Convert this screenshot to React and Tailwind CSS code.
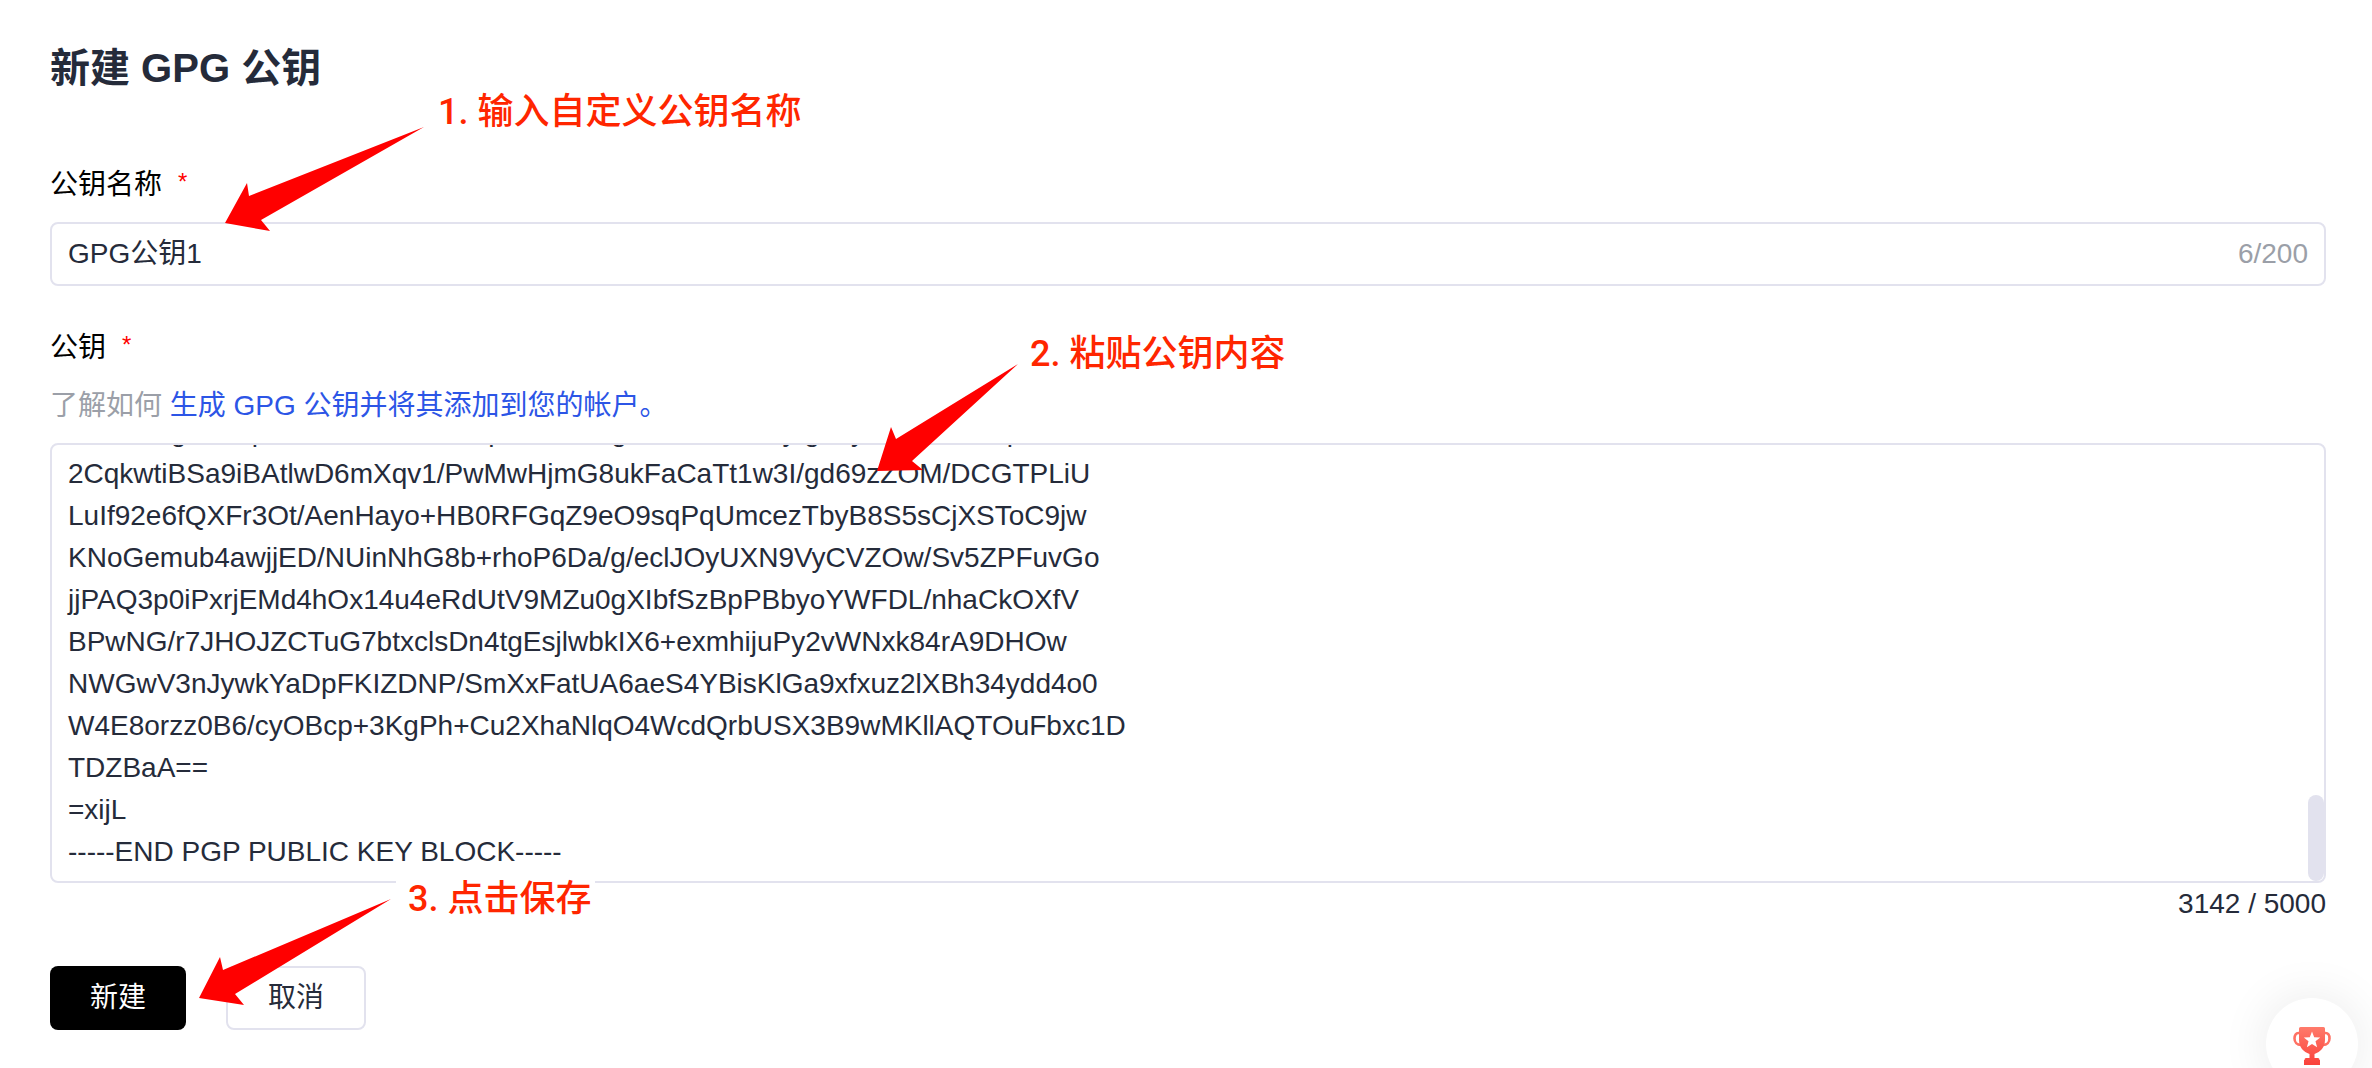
import React, { useEffect, useRef } from 'react';

const KEY_LINES = [
  '4hDe8Nga3KdpBuE4Xn9VhSa2KpD0HeN7gu4dn6b0ha5ytgo8yeh3bT9u0np2vRuZ',
  '2CqkwtiBSa9iBAtlwD6mXqv1/PwMwHjmG8ukFaCaTt1w3I/gd69zZOM/DCGTPLiU',
  'LuIf92e6fQXFr3Ot/AenHayo+HB0RFGqZ9eO9sqPqUmcezTbyB8S5sCjXSToC9jw',
  'KNoGemub4awjjED/NUinNhG8b+rhoP6Da/g/eclJOyUXN9VyCVZOw/Sv5ZPFuvGo',
  'jjPAQ3p0iPxrjEMd4hOx14u4eRdUtV9MZu0gXIbfSzBpPBbyoYWFDL/nhaCkOXfV',
  'BPwNG/r7JHOJZCTuG7btxclsDn4tgEsjlwbkIX6+exmhijuPy2vWNxk84rA9DHOw',
  'NWGwV3nJywkYaDpFKIZDNP/SmXxFatUA6aeS4YBisKlGa9xfxuz2lXBh34ydd4o0',
  'W4E8orzz0B6/cyOBcp+3KgPh+Cu2XhaNlqO4WcdQrbUSX3B9wMKllAQTOuFbxc1D',
  'TDZBaA==',
  '=xijL',
  '-----END PGP PUBLIC KEY BLOCK-----',
];

function FieldLabel({ htmlFor, children }) {
  return (
    <label htmlFor={htmlFor} className="flex gap-4 text-black">
      {children}
      <span className="text-2xl leading-9 text-[#ff0000]">*</span>
    </label>
  );
}

function Note({ className, children }) {
  return (
    <p
      className={`absolute bg-white pr-1 pl-3 font-['Roboto','Noto_Sans_CJK_SC',sans-serif] text-4xl leading-[48px] font-medium whitespace-nowrap text-[#ff2600] ${className}`}
    >
      {children}
    </p>
  );
}

function Arrow({ className, width, height, d }) {
  return (
    <svg
      className={`pointer-events-none absolute ${className}`}
      width={width}
      height={height}
      viewBox={`0 0 ${width} ${height}`}
      aria-hidden="true"
    >
      <path d={d} fill="#ff0000" />
    </svg>
  );
}

function TrophyIcon() {
  return (
    <svg width="38" height="40" viewBox="0 0 38 40" aria-hidden="true">
      <defs>
        <linearGradient id="trophy" x1="0" y1="0" x2="0" y2="1">
          <stop offset="0" stopColor="#ff7b6b" />
          <stop offset="1" stopColor="#fa413a" />
        </linearGradient>
      </defs>
      <path
        d="M8 7H5.500C3 7 1.500 9 1.500 12.500S4 19 8 19M30 7H32.500C35 7 36.500 9 36.500 12.500S34 19 30 19"
        fill="none"
        stroke="#ff7163"
        strokeWidth="2.600"
      />
      <path
        d="M7.500 1H30.500Q32 1 32 2.500V14C32 21 27.500 26 21.500 28V32H25Q26.500 32 26.500 34V35H11.500V34Q11.500 32 13 32H16.500V28C10.500 26 6 21 6 14V2.500Q6 1 7.500 1ZM11 34H27V39H11Z"
        fill="url(#trophy)"
      />
      <path
        d="M19 5.500L21.200 11.200L27.200 11.500L22.500 15.300L24.100 21.200L19 17.900L13.900 21.200L15.500 15.300L10.800 11.500L16.800 11.200Z"
        fill="#fff"
      />
    </svg>
  );
}

export default function App() {
  const keyRef = useRef(null);

  // keep the end of the pasted key in view
  useEffect(() => {
    keyRef.current.scrollTop = keyRef.current.scrollHeight;
  }, []);

  return (
    <div className="relative flex min-h-screen flex-col gap-[68px] overflow-hidden bg-white pt-10 pr-[46px] pl-[50px] font-['Liberation_Sans','Noto_Sans_CJK_SC',sans-serif] text-[28px] leading-[42px] text-[#252b3a]">
      <h1 className="text-[40px] leading-[56px] font-bold">新建 GPG 公钥</h1>

      <form className="flex flex-col gap-[41px]" onSubmit={(e) => e.preventDefault()}>
        <div className="flex flex-col gap-4">
          <FieldLabel htmlFor="key-name">公钥名称</FieldLabel>
          <div className="flex h-16 items-center rounded-lg border-2 border-[#e2e2ee] px-4">
            <input
              id="key-name"
              type="text"
              maxLength={200}
              defaultValue="GPG公钥1"
              className="min-w-0 flex-1 outline-none"
            />
            <span className="text-[#9b9fa8]">6/200</span>
          </div>
        </div>

        <div className="flex flex-col gap-4">
          <FieldLabel htmlFor="key-content">公钥</FieldLabel>
          <p className="text-[#9b9fa8]">
            了解如何{' '}
            <a href="#help" className="text-[#2c55e6]">
              生成 GPG 公钥并将其添加到您的帐户。
            </a>
          </p>
          <div>
            <div className="relative">
              <textarea
                id="key-content"
                ref={keyRef}
                rows={10}
                spellCheck={false}
                defaultValue={KEY_LINES.join('\n')}
                className="block w-full resize-none rounded-lg border-2 border-[#e2e2ee] px-4 py-2 outline-none [scrollbar-width:none]"
              />
              {/* scroll thumb */}
              <div className="absolute right-0.5 bottom-0.5 h-[86px] w-4 rounded-full bg-[#e2e2ee]" />
            </div>
            <p className="text-right">3142 / 5000</p>
          </div>
        </div>

        <div className="flex gap-10">
          <button type="submit" className="h-16 rounded-lg bg-black px-10 text-white">
            新建
          </button>
          <button type="button" className="h-16 rounded-lg border-2 border-[#e2e2ee] bg-white px-10">
            取消
          </button>
        </div>
      </form>

      <Note className="top-[88px] left-[426px]">1. 输入自定义公钥名称</Note>
      <Note className="top-[330px] left-[1018px]">2. 粘贴公钥内容</Note>
      <Note className="top-[875px] left-[396px]">3. 点击保存</Note>

      <Arrow
        className="top-[127px] left-[225px]"
        width={199}
        height={105}
        d="M199 0L24 69L22 56L0 96L45 104L36 93Z"
      />
      <Arrow
        className="top-[364px] left-[877px]"
        width={142}
        height={109}
        d="M141 0L19 75L14 63L0 107L46 106L35 97Z"
      />
      <Arrow
        className="top-[899px] left-[199px]"
        width={193}
        height={107}
        d="M192 0L24 71L21 58L0 99L45 106L36 95Z"
      />

      <button
        type="button"
        aria-label="活动"
        className="absolute right-[14px] bottom-[-22px] flex size-[92px] items-center justify-center rounded-full bg-white pt-1 shadow-[0_0_50px_rgba(0,0,0,0.09)]"
      >
        <TrophyIcon />
      </button>
    </div>
  );
}
